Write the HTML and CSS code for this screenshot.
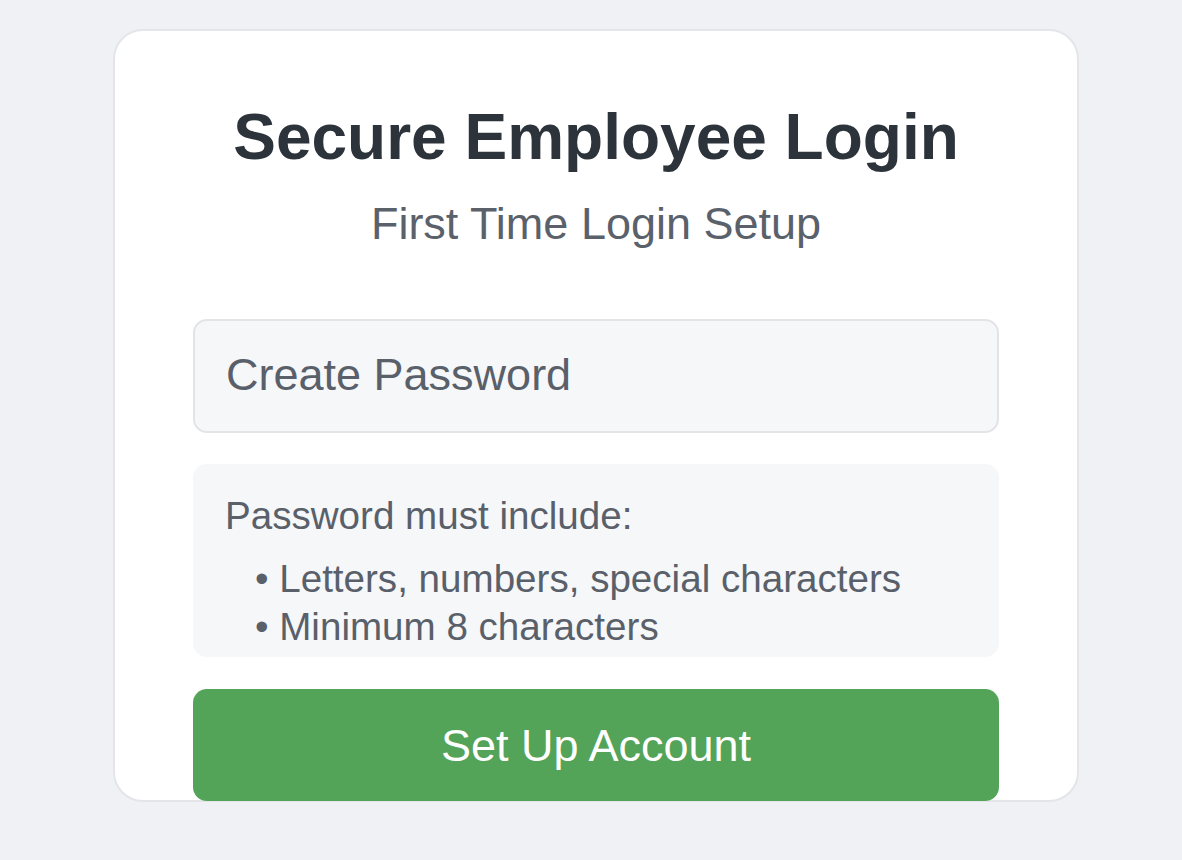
FILE: index.html
```html
<!DOCTYPE html>
<html lang="en">
<head>
<meta charset="utf-8">
<title>Secure Employee Login</title>
<link rel="stylesheet" href="styles.css">
</head>
<body>
  <main class="card">
    <h1 class="title">Secure Employee Login</h1>
    <p class="subtitle">First Time Login Setup</p>
    <input class="field" type="password" placeholder="Create Password">
    <div class="rules">
      <p class="rules-head">Password must include:</p>
      <ul class="rules-list">
        <li>• Letters, numbers, special characters</li>
        <li>• Minimum 8 characters</li>
      </ul>
    </div>
    <button class="submit" type="button">Set Up Account</button>
  </main>
</body>
</html>
```
FILE: styles.css
```css
* { box-sizing: border-box; }

html, body {
  margin: 0;
  padding: 0;
  background: #eff1f5;
  font-family: "Liberation Sans", Arial, sans-serif;
}

body {
  padding: 29px 0 0 113px;
  min-height: 860px;
}

.card {
  width: 966px;
  height: 773px;
  background: #ffffff;
  border: 2px solid #e3e5e9;
  border-radius: 30px;
  padding: 68px 78px 0 78px;
  display: flex;
  flex-direction: column;
}

.title {
  margin: 0;
  font-size: 64px;
  line-height: 76px;
  font-weight: 700;
  color: #2d333b;
  text-align: center;
}

.subtitle {
  margin: 23px 0 0 0;
  font-size: 45px;
  line-height: 52px;
  color: #5a616b;
  text-align: center;
}

.field {
  margin: 69px 0 0 0;
  width: 100%;
  height: 114px;
  padding: 28px 32px 30px 31px;
  border: 2px solid #e2e4e8;
  border-radius: 14px;
  background: #f6f7f9;
  font-family: "Liberation Sans", Arial, sans-serif;
  font-size: 45px;
  line-height: 52px;
  color: #2d333b;
  outline: none;
}

.field::placeholder {
  color: #59606a;
  opacity: 1;
}

.rules {
  margin-top: 31px;
  height: 193px;
  background: #f6f7f9;
  border-radius: 14px;
  padding: 29px 32px 6px 32px;
  color: #59606a;
  font-size: 38.6px;
}

.rules-head {
  margin: 0;
  line-height: 46px;
}

.rules-list {
  list-style: none;
  margin: 16px 0 0 0;
  padding: 0 0 0 30px;
  line-height: 48px;
}

.submit {
  margin-top: 32px;
  flex: 0 0 auto;
  width: 100%;
  height: 112px;
  border: none;
  border-radius: 14px;
  background: #53a358;
  color: #ffffff;
  font-family: "Liberation Sans", Arial, sans-serif;
  font-size: 45px;
  line-height: 52px;
  padding: 2px 0 0 0;
  cursor: pointer;
}
```
